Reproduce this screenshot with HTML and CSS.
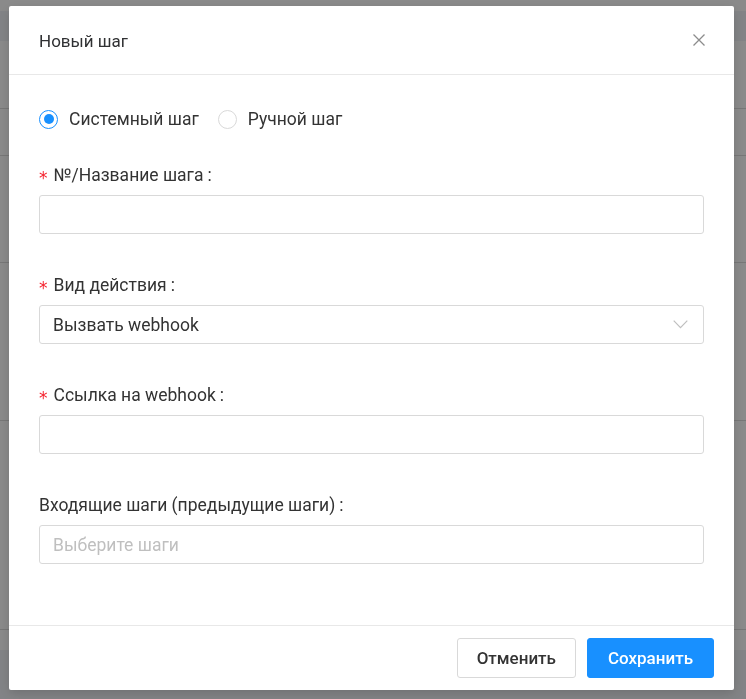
FILE: index.html
```html
<!DOCTYPE html>
<html lang="ru">
<head>
  <meta charset="UTF-8" />
  <meta name="viewport" content="width=device-width, initial-scale=1.0"/>
  <title>Новый шаг</title>
  <link rel="stylesheet" href="styles.css">
</head>
<body>

  <!-- page behind the dialog -->
  <div class="page">
    <div class="page-top"></div>
    <div class="page-head"></div>
    <div class="page-row" style="height: 68px"></div>
    <div class="page-row" style="height: 47px"></div>
    <div class="page-row" style="height: 107px"></div>
    <div class="page-row" style="height: 158px"></div>
    <div class="page-row" style="height: 209px"></div>
    <div class="page-gap" style="height: 20px"></div>
    <div class="page-foot"></div>
  </div>

  <!-- MODAL -->
  <div class="mask">
    <div class="modal">
      <div class="modal-header">
        <span class="modal-title">Новый шаг</span>
        <button class="modal-close" aria-label="Закрыть">
          <svg width="12" height="12" viewBox="0 0 12 12">
            <path d="M0.5 0.5 L11.5 11.5 M11.5 0.5 L0.5 11.5" stroke="#8c8c8c" stroke-width="1.3" fill="none"/>
          </svg>
        </button>
      </div>

      <div class="modal-body">
        <div class="radio-group">
          <label class="radio checked"><span class="radio-dot"></span>Системный шаг</label>
          <label class="radio"><span class="radio-dot"></span>Ручной шаг</label>
        </div>

        <div class="form-item">
          <div class="form-label required">№/Название шага</div>
          <div class="input"></div>
        </div>

        <div class="form-item">
          <div class="form-label required">Вид действия</div>
          <div class="input select">
            <span>Вызвать webhook</span>
            <svg class="arrow" width="15" height="9" viewBox="0 0 15 9">
              <path d="M0.7 0.7 L7.5 7.7 L14.3 0.7" stroke="#bfbfbf" stroke-width="1.2" fill="none"/>
            </svg>
          </div>
        </div>

        <div class="form-item">
          <div class="form-label required">Ссылка на webhook</div>
          <div class="input"></div>
        </div>

        <div class="form-item">
          <div class="form-label">Входящие шаги (предыдущие шаги)</div>
          <div class="input placeholder">Выберите шаги</div>
        </div>
      </div>

      <div class="modal-footer">
        <button class="btn">Отменить</button>
        <button class="btn btn-primary">Сохранить</button>
      </div>
    </div>
  </div>

</body>
</html>
```

FILE: styles.css
```css
* {
  box-sizing: border-box;
}

body {
  margin: 0;
  font-family: Roboto, "Noto Sans", sans-serif;
  color: #333;
  background: #fff;
}

/* page behind */
.page {
  height: 699px;
  overflow: hidden;
}

.page-top {
  height: 11px;
  background: #fff;
}

.page-head {
  height: 30px;
  background: #f1f3f7;
}

.page-row {
  border-bottom: 1px solid #dcdcdc;
}

.page-foot {
  height: 60px;
  background: #f1f3f7;
}

/* modal */
.mask {
  position: fixed;
  top: 0;
  left: 0;
  right: 0;
  bottom: 0;
  background: rgba(0, 0, 0, 0.46);
  padding: 6px 0 0 9px;
}

.modal {
  width: 725px;
  background: #fff;
  border-radius: 2px;
  box-shadow: 0 4px 12px rgba(0, 0, 0, 0.15);
}

.modal-header {
  height: 69px;
  padding: 0 29px 0 30px;
  display: flex;
  align-items: center;
  justify-content: space-between;
  border-bottom: 1px solid #e8e8e8;
}

.modal-title {
  font-size: 17px;
  color: #303133;
  margin-top: 1px;
}

.modal-close {
  border: none;
  background: none;
  padding: 0;
  width: 12px;
  height: 12px;
  display: flex;
  cursor: pointer;
}

.modal-body {
  padding: 33px 30px 21px;
}

.radio-group {
  display: flex;
  gap: 19px;
  margin-bottom: 34px;
}

.radio {
  display: flex;
  align-items: center;
  gap: 11px;
  font-size: 17.5px;
  line-height: 22px;
  color: #333;
}

.radio-dot {
  width: 19px;
  height: 19px;
  border: 1px solid #d9d9d9;
  border-radius: 50%;
  display: flex;
  align-items: center;
  justify-content: center;
}

.radio.checked .radio-dot {
  border-color: #1890ff;
}

.radio.checked .radio-dot::after {
  content: "";
  width: 10px;
  height: 10px;
  border-radius: 50%;
  background: #1890ff;
}

.form-item {
  margin-bottom: 40px;
}

.form-label {
  font-size: 17.5px;
  line-height: 22px;
  color: #333;
  margin-bottom: 9px;
}

.form-label::after {
  content: ":";
  margin-left: 4px;
}

.form-label.required::before {
  content: "*";
  display: inline-block;
  color: #f5222d;
  font-family: "DejaVu Sans", sans-serif;
  font-size: 17px;
  line-height: 22px;
  margin-right: 6px;
  vertical-align: top;
  transform: translateY(3px);
}

.input {
  height: 39px;
  border: 1px solid #d9d9d9;
  border-radius: 3px;
  padding: 0 13px;
  display: flex;
  align-items: center;
  font-size: 17.5px;
  color: #333;
}

.select {
  justify-content: space-between;
  padding-right: 15px;
}

.placeholder {
  color: #bfbfbf;
}

.modal-footer {
  border-top: 1px solid #e8e8e8;
  padding: 12px 20px;
  display: flex;
  justify-content: flex-end;
  gap: 11px;
}

.btn {
  height: 40px;
  padding: 0 19px;
  font-family: Roboto, sans-serif;
  font-size: 17px;
  font-weight: 500;
  color: #333;
  background: #fff;
  border: 1px solid #d9d9d9;
  border-radius: 3px;
  cursor: pointer;
}

.btn-primary {
  background: #1890ff;
  border-color: #1890ff;
  color: #fff;
  padding: 0 20px;
}
```
